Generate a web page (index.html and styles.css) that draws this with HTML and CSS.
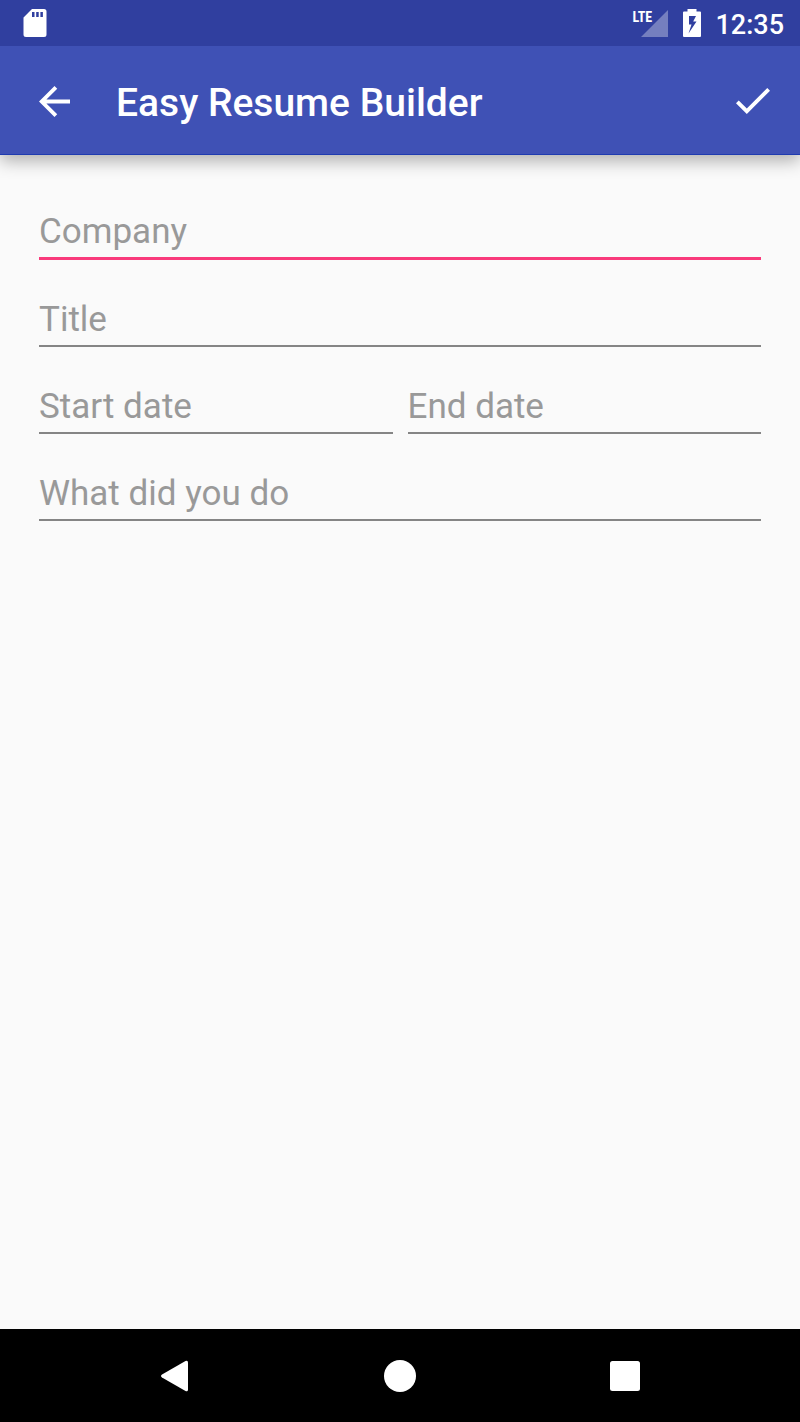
FILE: index.html
```html
<!DOCTYPE html>
<html lang="en">
<head>
<meta charset="utf-8">
<meta name="viewport" content="width=device-width, initial-scale=1">
<title>Easy Resume Builder</title>
<link rel="stylesheet" href="styles.css">
</head>
<body class="screen">
  <div class="status-bar">
    <svg class="icon-sd" viewBox="0 0 24 30" aria-hidden="true">
      <path fill-rule="evenodd" d="M9 1H21Q23.500 1 23.500 3.500V26.500Q23.500 29 21 29H3Q.500 29 .500 26.500V9.500Z M9 4V9H11.500V4Z M13.200 4V9H15.700V4Z M17.400 4V9H19.900V4Z"/>
    </svg>
    <div class="status-icons">
      <div class="signal">
        <svg class="icon-signal" viewBox="0 0 27 27" aria-hidden="true"><path d="M27 0V27H0Z"/></svg>
        <span class="signal-label">LTE</span>
      </div>
      <svg class="icon-battery" viewBox="0 0 18 28" aria-hidden="true">
        <path fill-rule="evenodd" d="M4.500 0H13.500V2.500H17Q18 2.500 18 3.500V27Q18 28 17 28H1Q0 28 0 27V3.500Q0 2.500 1 2.500H4.500Z M6 7V15.500H8.500L5.500 24.500L13.500 12.500H10.200L13 7Z"/>
      </svg>
      <time class="clock">12:35</time>
    </div>
  </div>
  <header class="toolbar">
    <button class="icon-button" type="button" aria-label="Back">
      <svg class="icon-back" viewBox="4 4 16 16" aria-hidden="true"><path d="M20 11H7.830l5.590-5.590L12 4l-8 8 8 8 1.410-1.410L7.830 13H20z"/></svg>
    </button>
    <h1 class="title">Easy Resume Builder</h1>
    <button class="icon-button" type="submit" form="experience" aria-label="Save">
      <svg class="icon-check" viewBox="3.410 5.590 17.590 13.410" aria-hidden="true"><path d="M9 16.170L4.830 12l-1.420 1.410L9 19 21 7l-1.410-1.410z"/></svg>
    </button>
  </header>
  <main class="content">
    <form class="form" id="experience">
      <input class="field field-active" type="text" placeholder="Company" aria-label="Company">
      <input class="field" type="text" placeholder="Title" aria-label="Title">
      <div class="dates">
        <input class="field" type="text" placeholder="Start date" aria-label="Start date">
        <input class="field" type="text" placeholder="End date" aria-label="End date">
      </div>
      <input class="field" type="text" placeholder="What did you do" aria-label="What did you do">
    </form>
  </main>
  <nav class="nav-bar" aria-label="System">
    <button class="nav-button" type="button" aria-label="Back">
      <svg class="nav-icon" viewBox="0 0 32 32" aria-hidden="true"><path d="M3 14.500L26.500 .900Q29 0 29 2.500V29.500Q29 32 26.500 31.100L3 17.500Q1 16 3 14.500Z"/></svg>
    </button>
    <button class="nav-button" type="button" aria-label="Home">
      <svg class="nav-icon" viewBox="0 0 32 32" aria-hidden="true"><circle cx="16" cy="16" r="16"/></svg>
    </button>
    <button class="nav-button" type="button" aria-label="Recent apps">
      <svg class="nav-icon" viewBox="0 0 32 32" aria-hidden="true"><rect x="1" y="1" width="30" height="30" rx="2.500"/></svg>
    </button>
  </nav>
</body>
</html>
```
FILE: styles.css
```css
* { box-sizing: border-box; }

.screen {
  margin: 0;
  min-height: 100vh;
  display: flex;
  flex-direction: column;
  background: #fafafa;
  font-family: Roboto, "Noto Sans", sans-serif;
}

svg { display: block; fill: #fff; }

button {
  margin: 0;
  padding: 0;
  border: 0;
  background: none;
  cursor: pointer;
}

.status-bar {
  position: relative;
  z-index: 2;
  display: flex;
  align-items: center;
  justify-content: space-between;
  height: 46px;
  padding: 0 16px 0 23px;
  background: #303f9f;
  color: #fff;
}

.icon-sd { width: 24px; height: 30px; }

.status-icons { display: flex; align-items: center; }

.signal {
  position: relative;
  display: flex;
  justify-content: flex-end;
  width: 36px;
  margin-right: 15px;
}

.icon-signal { width: 27px; height: 27px; fill: #757fbf; }

.signal-label {
  position: absolute;
  top: 0;
  left: 0;
  font-family: "Liberation Sans Narrow", "Roboto Condensed", Roboto, sans-serif;
  font-size: 14px;
  font-weight: 700;
  line-height: 14px;
}

.icon-battery { width: 18px; height: 28px; margin-right: 14px; }

.clock { padding-top: 4px; font-size: 27px; font-weight: 500; line-height: 32px; }

.toolbar {
  position: relative;
  display: flex;
  align-items: center;
  height: 109px;
  padding: 2px 30px 0 39px;
  background: #3f51b5;
  border-bottom: 1px solid #1f3bb0;
  box-shadow: 0 6px 16px rgba(0, 0, 0, 0.3);
}

.icon-button { display: flex; }

.icon-back { width: 31px; height: 31px; }

.icon-check { width: 34px; height: 26px; }

.title {
  flex: 1;
  margin: 0 0 0 46px;
  padding-top: 4px;
  color: #fff;
  font-size: 39px;
  font-weight: 500;
  line-height: 46px;
}

.content { flex: 1; padding: 48px 39px; }

.form { display: flex; flex-direction: column; gap: 30px; }

.dates { display: grid; grid-template-columns: 1fr 1fr; gap: 15px; }

.field {
  width: 100%;
  min-width: 0;
  height: 57px;
  padding: 3px 0 0;
  border: 0;
  border-bottom: 2px solid #858585;
  border-radius: 0;
  outline: 0;
  background: none;
  color: #212121;
  font: 400 35px/42px Roboto, "Noto Sans", sans-serif;
}

.field::placeholder { color: #999; opacity: 1; }

.field-active { border-bottom: 3px solid #f93a7b; }

.nav-bar {
  display: grid;
  grid-template-columns: repeat(3, minmax(0, 225px));
  justify-content: center;
  height: 93px;
  background: #000;
}

.nav-button { display: flex; align-items: center; justify-content: center; }

.nav-icon { width: 32px; height: 32px; }
```
